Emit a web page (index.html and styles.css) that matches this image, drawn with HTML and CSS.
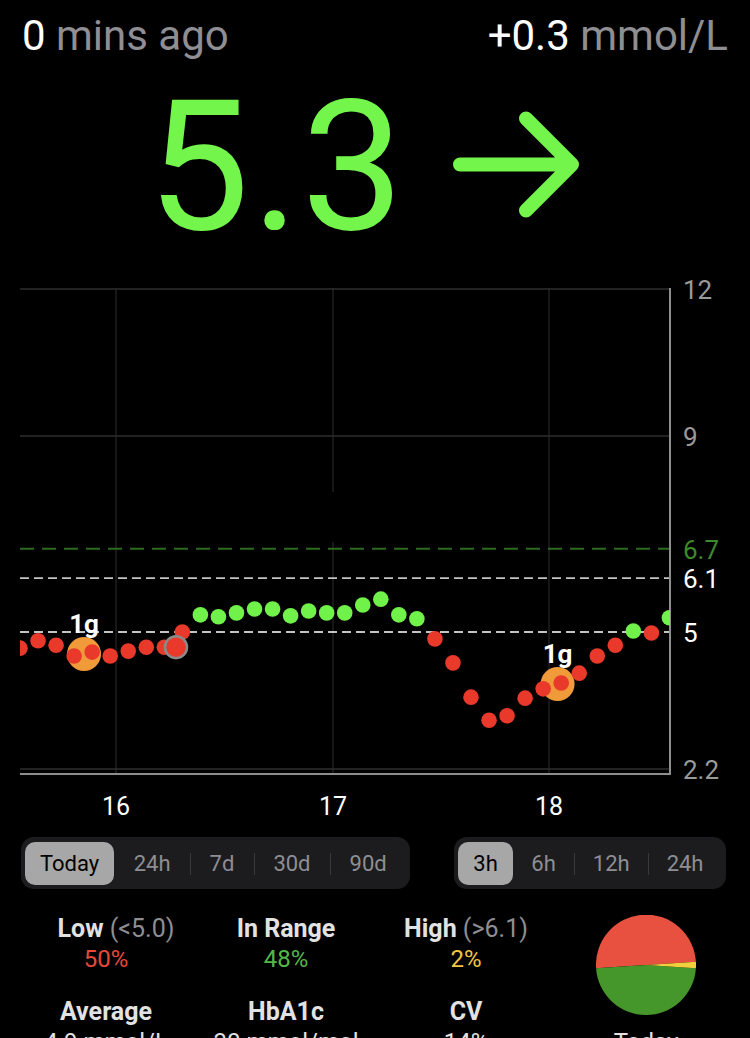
FILE: index.html
```html
<!DOCTYPE html>
<html lang="en">
<head>
  <meta charset="UTF-8">
  <meta name="viewport" content="width=device-width, initial-scale=1.0">
  <title>Glucose</title>
  <link rel="stylesheet" href="styles.css">
</head>
<body>
  <div class="screen">
    <header class="meta">
      <div><span class="hi">0</span> mins ago</div>
      <div><span class="hi">+0.3</span> mmol/L</div>
    </header>

    <div class="reading">
      <span class="reading-value">5.3</span>
      <svg class="trend" width="140" height="120" viewBox="448 107.5 140 120">
        <path d="M461 165 H573 M527 119 L573 165 L527 211" />
      </svg>
    </div>

    <svg id="chart" class="chart" width="750" height="560" viewBox="0 270 750 560"></svg>

    <div class="controls">
      <div class="segmented">
        <span class="seg active">Today</span>
        <span class="seg">24h</span>
        <span class="seg">7d</span>
        <span class="seg">30d</span>
        <span class="seg">90d</span>
      </div>
      <div class="segmented compact">
        <span class="seg active">3h</span>
        <span class="seg">6h</span>
        <span class="seg">12h</span>
        <span class="seg">24h</span>
      </div>
    </div>

    <div class="stats">
      <div class="stat">
        <div class="stat-label offset">Low <span class="muted">(&lt;5.0)</span></div>
        <div class="stat-value low">50%</div>
      </div>
      <div class="stat">
        <div class="stat-label">In Range</div>
        <div class="stat-value in-range">48%</div>
      </div>
      <div class="stat">
        <div class="stat-label">High <span class="muted">(&gt;6.1)</span></div>
        <div class="stat-value high">2%</div>
      </div>
      <div class="pie-cell">
        <svg class="pie" width="100" height="100" viewBox="0 0 100 100">
          <path fill="#e8513f" d="M50 50 L0.1 53.14 A50 50 0 1 1 99.9 46.86 Z" />
          <path fill="#45972c" d="M50 50 L99.9 53.14 A50 50 0 0 1 0.1 53.14 Z" />
          <path fill="#f2d03c" d="M50 50 L99.9 46.86 A50 50 0 0 1 99.9 53.14 Z" />
        </svg>
        <div class="pie-label">Today</div>
      </div>
      <div class="stat">
        <div class="stat-label">Average</div>
        <div class="stat-value">4.9 mmol/L</div>
      </div>
      <div class="stat">
        <div class="stat-label">HbA1c</div>
        <div class="stat-value">30 mmol/mol</div>
      </div>
      <div class="stat">
        <div class="stat-label">CV</div>
        <div class="stat-value">14%</div>
      </div>
    </div>
  </div>

  <script>
    const svgNS = 'http://www.w3.org/2000/svg';
    const chart = document.getElementById('chart');

    const plot = { left: 20, right: 670, top: 289, bottom: 773 };
    const pxPerUnit = 49;
    const pxPerReading = 18.04; // 5 minutes
    const yOf = (v) => plot.top + (12 - v) * pxPerUnit;
    const xOf = (i) => plot.left + i * pxPerReading;

    // mmol/L every 5 mins, starting 15:33
    const readings = [
      4.67, 4.82, 4.73, 4.51, 4.59, 4.51, 4.61, 4.69, 4.69, 5.00,
      5.35, 5.31, 5.39, 5.47, 5.47, 5.33, 5.43, 5.39, 5.39, 5.55,
      5.67, 5.35, 5.27, 4.86, 4.37, 3.67, 3.20, 3.29, 3.65, 3.84,
      3.96, 4.16, 4.51, 4.73, 5.02, 4.98, 5.29
    ];
    const carbs = [
      { i: 3.55, v: 4.55, label: '1g' },
      { i: 29.8, v: 3.94, label: '1g' }
    ];

    function add(tag, attrs, parent = chart) {
      const el = document.createElementNS(svgNS, tag);
      for (const k in attrs) el.setAttribute(k, attrs[k]);
      parent.appendChild(el);
      return el;
    }

    const defs = add('defs', {});
    const clip = add('clipPath', { id: 'plot-clip' }, defs);
    add('rect', { x: plot.left, y: 270, width: plot.right - plot.left, height: 520 }, clip);

    // grid
    [12, 9].forEach((v) => {
      add('line', { x1: plot.left, x2: plot.right, y1: yOf(v), y2: yOf(v), stroke: '#2e2e30', 'stroke-width': 1.5 });
    });
    add('line', { x1: plot.left, x2: plot.right, y1: 769, y2: 769, stroke: '#444', 'stroke-width': 1 });
    add('line', { x1: 116, x2: 116, y1: plot.top, y2: plot.bottom, stroke: '#2e2e30', 'stroke-width': 1 });
    add('line', { x1: 333, x2: 333, y1: plot.top, y2: 492, stroke: '#2e2e30', 'stroke-width': 1 });
    add('line', { x1: 333, x2: 333, y1: 542, y2: plot.bottom, stroke: '#2e2e30', 'stroke-width': 1 });
    add('line', { x1: 549, x2: 549, y1: plot.top, y2: plot.bottom, stroke: '#2e2e30', 'stroke-width': 1 });

    // target lines
    add('line', { x1: plot.left, x2: plot.right, y1: yOf(6.7), y2: yOf(6.7), stroke: '#2c6a21', 'stroke-width': 2, 'stroke-dasharray': '14 8' });
    [6.1, 5].forEach((v) => {
      add('line', { x1: plot.left, x2: plot.right, y1: yOf(v), y2: yOf(v), stroke: '#c4c4c4', 'stroke-width': 1.8, 'stroke-dasharray': '9 5' });
    });

    // axes
    add('line', { x1: plot.right, x2: plot.right, y1: plot.top - 1, y2: plot.bottom + 2, stroke: '#8e8e8e', 'stroke-width': 2 });
    add('line', { x1: plot.left, x2: plot.right + 1, y1: plot.bottom + 1, y2: plot.bottom + 1, stroke: '#8e8e8e', 'stroke-width': 2 });

    // y labels
    [
      { v: 12, text: '12', cls: 'axis-label' },
      { v: 9, text: '9', cls: 'axis-label' },
      { v: 6.7, text: '6.7', cls: 'axis-label target' },
      { v: 6.1, text: '6.1', cls: 'axis-label bright' },
      { v: 5, text: '5', cls: 'axis-label bright' },
      { v: 2.2, text: '2.2', cls: 'axis-label' }
    ].forEach((l) => {
      add('text', { x: 683, y: yOf(l.v) + 10, class: l.cls }).textContent = l.text;
    });

    // x labels
    [[116, '16'], [333, '17'], [549, '18']].forEach(([x, t]) => {
      add('text', { x: x, y: 815, class: 'time-label', 'text-anchor': 'middle' }).textContent = t;
    });

    const layer = add('g', { 'clip-path': 'url(#plot-clip)' });

    carbs.forEach((c) => {
      add('circle', { cx: xOf(c.i), cy: yOf(c.v), r: 17, fill: '#f09a3a' }, layer);
    });

    readings.forEach((v, i) => {
      add('circle', { cx: xOf(i), cy: yOf(v), r: 7.8, fill: v > 5 ? '#70f24a' : '#e8392b' }, layer);
    });

    // selected reading
    add('circle', { cx: 176, cy: yOf(4.69), r: 11, fill: '#e8392b', stroke: '#8a8a8a', 'stroke-width': 2.5 }, layer);

    carbs.forEach((c) => {
      add('text', { x: xOf(c.i), y: yOf(c.v) - 21, class: 'carb-label', 'text-anchor': 'middle' }).textContent = c.label;
    });
  </script>
</body>
</html>
```

FILE: styles.css
```css
body {
  margin: 0;
  background: #000;
  color: #fff;
  font-family: Roboto, "Noto Sans", sans-serif;
}
.screen {
  width: 750px;
  height: 1038px;
  overflow: hidden;
}
.meta {
  display: flex;
  justify-content: space-between;
  padding: 15px 22px 0 22px;
  font-size: 42px;
  line-height: 42px;
  color: #8e8e93;
}
.meta .hi {
  color: #fff;
}
.reading {
  display: flex;
  justify-content: center;
  align-items: center;
  gap: 41px;
  height: 180px;
  margin-top: 20px;
  padding-right: 16px;
}
.reading-value {
  font-size: 182px;
  line-height: 180px;
  letter-spacing: 2px;
  color: #73f54b;
}
.trend {
  display: block;
}
.trend path {
  fill: none;
  stroke: #73f54b;
  stroke-width: 14;
  stroke-linecap: round;
  stroke-linejoin: round;
}
.chart {
  display: block;
  margin-top: 13px;
}
.axis-label {
  font-size: 26px;
  fill: #9a9a9a;
}
.axis-label.target {
  fill: #3d8a2a;
}
.axis-label.bright {
  fill: #fff;
}
.time-label {
  font-size: 25px;
  fill: #fff;
}
.carb-label {
  font-size: 26px;
  font-weight: 700;
  fill: #fff;
}
.controls {
  display: flex;
  justify-content: space-between;
  padding: 0 24px 0 21px;
  margin-top: 7px;
}
.segmented {
  display: flex;
  align-items: center;
  height: 52px;
  box-sizing: border-box;
  padding: 4px;
  background: #1c1c1e;
  border-radius: 13px;
}
.seg {
  position: relative;
  height: 43px;
  line-height: 43px;
  padding: 0 19.5px;
  font-size: 22px;
  color: #8e8e93;
}
.segmented.compact .seg {
  padding: 0 18.5px;
}
.seg + .seg::before {
  content: '';
  position: absolute;
  left: 0;
  top: 11px;
  bottom: 10px;
  width: 1px;
  background: #3a3a3c;
}
.seg.active + .seg::before {
  display: none;
}
.segmented .seg.active {
  padding: 0 15px;
  background: #a7a7a7;
  color: #000;
  border-radius: 10px;
}
.stats {
  display: grid;
  grid-template-columns: repeat(4, 180px);
  padding-left: 16px;
  margin-top: 24px;
  row-gap: 20px;
  text-align: center;
}
.stat-label {
  font-size: 25px;
  line-height: 31px;
  font-weight: 700;
  color: #e2e2e2;
}
.stat-label.offset {
  padding-left: 20px;
}
.stat-label .muted {
  font-weight: 400;
  color: #8e8e93;
}
.stat-value {
  font-size: 24px;
  line-height: 31px;
  color: #e2e2e2;
}
.stat-value.low {
  color: #e6493a;
}
.stat-value.in-range {
  color: #52b848;
}
.stat-value.high {
  color: #f4c542;
}
.pie-cell {
  grid-column: 4;
  grid-row: 1 / span 2;
  display: flex;
  flex-direction: column;
  align-items: center;
}
.pie {
  display: block;
  margin-top: 2px;
}
.pie-label {
  margin-top: 12px;
  font-size: 24px;
  line-height: 31px;
  color: #e2e2e2;
}
```
